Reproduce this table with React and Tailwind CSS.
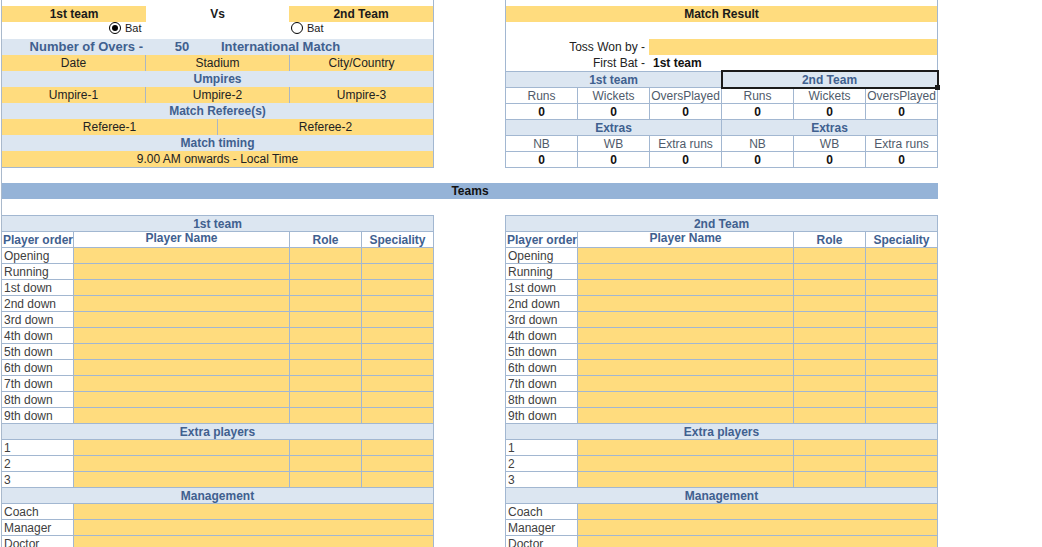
import React from "react";

const players = [
  "Opening",
  "Running",
  "1st down",
  "2nd down",
  "3rd down",
  "4th down",
  "5th down",
  "6th down",
  "7th down",
  "8th down",
  "9th down",
];

function Radio({ checked }) {
  return (
    <span className="w-[12px] h-[12px] rounded-full border border-black bg-white flex items-center justify-center shrink-0">
      {checked ? <span className="w-[6px] h-[6px] rounded-full bg-black" /> : null}
    </span>
  );
}

function TopLeft() {
  const sep = "border-r border-[#aab6c4]";
  return (
    <div className="w-[432px] h-[168px] shrink-0 border-r border-b border-[#a2b7d1] flex flex-col">
      <div className="h-[6px] shrink-0" />
      <div className="flex h-[16px] shrink-0 font-bold text-[#1a1a1a]">
        <div className="w-[144px] bg-[#ffdc7e] flex items-center justify-center">1st team</div>
        <div className="w-[143px] flex items-center justify-center">Vs</div>
        <div className="flex-1 bg-[#ffdc7e] flex items-center justify-center">2nd Team</div>
      </div>
      <div className="flex h-[17px] shrink-0 items-start text-[11px] text-[#1a1a1a]">
        <div className="w-[287px] pl-[107px] flex items-center gap-[4px]">
          <Radio checked />
          <span className="leading-[12px]">Bat</span>
        </div>
        <div className="pl-[2px] flex items-center gap-[4px]">
          <Radio />
          <span className="leading-[12px]">Bat</span>
        </div>
      </div>
      <div className="flex h-[16px] shrink-0 bg-[#dce6f1] items-center font-bold text-[13px] text-[#40608f] whitespace-nowrap">
        <div className="w-[144px] text-right pr-[3px]">Number of Overs -</div>
        <div className="w-[72px] text-center">50</div>
        <div className="flex-1 pl-[3px]">International Match</div>
      </div>
      <div className="flex h-[16px] shrink-0 bg-[#ffdc7e] text-[#222]">
        <div className={"w-[144px] flex items-center justify-center " + sep}>Date</div>
        <div className={"w-[144px] flex items-center justify-center " + sep}>Stadium</div>
        <div className="flex-1 flex items-center justify-center">City/Country</div>
      </div>
      <div className="flex h-[16px] shrink-0 bg-[#dce6f1] items-center justify-center font-bold text-[#40608f]">Umpires</div>
      <div className="flex h-[16px] shrink-0 bg-[#ffdc7e] text-[#222]">
        <div className={"w-[144px] flex items-center justify-center " + sep}>Umpire-1</div>
        <div className={"w-[144px] flex items-center justify-center " + sep}>Umpire-2</div>
        <div className="flex-1 flex items-center justify-center">Umpire-3</div>
      </div>
      <div className="flex h-[16px] shrink-0 bg-[#dce6f1] items-center justify-center font-bold text-[#40608f]">Match Referee(s)</div>
      <div className="flex h-[16px] shrink-0 bg-[#ffdc7e] text-[#222]">
        <div className={"w-[216px] flex items-center justify-center " + sep}>Referee-1</div>
        <div className="flex-1 flex items-center justify-center">Referee-2</div>
      </div>
      <div className="flex h-[16px] shrink-0 bg-[#dce6f1] items-center justify-center font-bold text-[#40608f]">Match timing</div>
      <div className="flex h-[16px] shrink-0 bg-[#ffdc7e] items-center justify-center text-[#222]">9.00 AM onwards - Local Time</div>
    </div>
  );
}

function StatRow({ labels, bold, last }) {
  const cls = bold
    ? "flex items-center justify-center font-bold text-[#111]"
    : "flex items-center justify-center text-[#4f5b6b]";
  return (
    <div className={last ? "flex h-[15px] shrink-0" : "flex h-[16px] shrink-0 border-b border-[#a2b7d1]"}>
      {labels.map((l, i) => (
        <div
          key={i}
          className={(i < 5 ? "w-[72px] border-r border-[#a2b7d1] " : "flex-1 ") + cls}
        >
          {l}
        </div>
      ))}
    </div>
  );
}

function TopRight() {
  return (
    <div className="w-[433px] h-[168px] shrink-0 border-l border-r border-b border-[#a2b7d1] flex flex-col whitespace-nowrap">
      <div className="h-[6px] shrink-0" />
      <div className="h-[16px] shrink-0 bg-[#ffdc7e] flex items-center justify-center font-bold text-[#1a1a1a]">Match Result</div>
      <div className="h-[17px] shrink-0" />
      <div className="h-[16px] shrink-0 flex text-[#222]">
        <div className="w-[143px] flex items-center justify-end pr-[4px]">Toss Won by -</div>
        <div className="flex-1 bg-[#ffdc7e]" />
      </div>
      <div className="h-[16px] shrink-0 flex items-center text-[#222]">
        <div className="w-[143px] text-right pr-[4px]">First Bat -</div>
        <div className="pl-[4px] font-bold text-[#111]">1st team</div>
      </div>
      <div className="border-t border-[#a2b7d1] flex flex-col shrink-0">
        <div className="flex h-[16px] shrink-0 border-b border-[#a2b7d1] bg-[#dce6f1] font-bold text-[#40608f]">
          <div className="w-[216px] border-r border-[#a2b7d1] flex items-center justify-center">1st team</div>
          <div className="flex-1 relative flex items-center justify-center">
            2nd Team
            <span className="absolute left-[-1px] top-[-2px] w-[218px] h-[19px] border-2 border-[#1b1b1b] z-10" />
            <span className="absolute left-[213px] top-[13px] w-[5px] h-[5px] bg-[#1b1b1b] z-10" />
          </div>
        </div>
        <StatRow labels={["Runs", "Wickets", "OversPlayed", "Runs", "Wickets", "OversPlayed"]} />
        <StatRow bold labels={["0", "0", "0", "0", "0", "0"]} />
        <div className="flex h-[16px] shrink-0 border-b border-[#a2b7d1] bg-[#dce6f1] font-bold text-[#40608f]">
          <div className="w-[216px] border-r border-[#a2b7d1] flex items-center justify-center">Extras</div>
          <div className="flex-1 flex items-center justify-center">Extras</div>
        </div>
        <StatRow labels={["NB", "WB", "Extra runs", "NB", "WB", "Extra runs"]} />
        <StatRow bold last labels={["0", "0", "0", "0", "0", "0"]} />
      </div>
    </div>
  );
}

function TeamTable({ title, outer }) {
  const row = "flex h-[16px] shrink-0 border-b border-[#a2b7d1]";
  const colA = "w-[72px] border-r border-[#a2b7d1] bg-white pl-[2px] flex items-center text-[#404040]";
  const yB = "w-[216px] border-r border-[#a2b7d1] bg-[#ffdc7e]";
  const yE = "w-[72px] border-r border-[#a2b7d1] bg-[#ffdc7e]";
  const head = "flex h-[16px] shrink-0 border-b border-r border-[#a2b7d1] bg-[#dce6f1] items-center justify-center font-bold text-[#40608f]";
  return (
    <div className={outer + " flex flex-col whitespace-nowrap"}>
      <div className={head}>{title}</div>
      <div className={row + " font-bold text-[#40608f]"}>
        <div className="w-[72px] border-r border-[#a2b7d1] pl-[1px] flex items-end overflow-visible">Player order</div>
        <div className="w-[216px] border-r border-[#a2b7d1] flex items-start justify-center leading-[13px]">Player Name</div>
        <div className="w-[72px] border-r border-[#a2b7d1] flex items-end justify-center">Role</div>
        <div className="w-[72px] border-r border-[#a2b7d1] flex items-end justify-center">Speciality</div>
      </div>
      {players.map((p) => (
        <div key={p} className={row}>
          <div className={colA}>{p}</div>
          <div className={yB} />
          <div className={yE} />
          <div className={yE} />
        </div>
      ))}
      <div className={head}>Extra players</div>
      {["1", "2", "3"].map((p) => (
        <div key={p} className={row}>
          <div className={colA}>{p}</div>
          <div className={yB} />
          <div className={yE} />
          <div className={yE} />
        </div>
      ))}
      <div className={head}>Management</div>
      {["Coach", "Manager", "Doctor"].map((p) => (
        <div key={p} className={row}>
          <div className={colA}>{p}</div>
          <div className="w-[360px] border-r border-[#a2b7d1] bg-[#ffdc7e]" />
        </div>
      ))}
    </div>
  );
}

export default function App() {
  return (
    <div className="w-[1042px] h-[547px] overflow-hidden bg-white text-[12px] leading-[14px] text-[#222] font-['Liberation_Sans',Arial,sans-serif]">
      <div className="ml-px border-l border-[#a9b9cc] flex flex-col">
        <div className="flex shrink-0">
          <TopLeft />
          <div className="w-[71px] shrink-0" />
          <TopRight />
        </div>
        <div className="h-[15px] shrink-0" />
        <div className="w-[936px] h-[16px] shrink-0 bg-[#95b3d7] flex items-center justify-center font-bold text-[#111]">Teams</div>
        <div className="h-[16px] shrink-0" />
        <div className="flex items-start shrink-0">
          <TeamTable title="1st team" outer="w-[432px] border-t border-[#a2b7d1] shrink-0" />
          <div className="w-[71px] shrink-0" />
          <TeamTable title="2nd Team" outer="w-[433px] border-t border-l border-[#a2b7d1] shrink-0" />
        </div>
      </div>
    </div>
  );
}
